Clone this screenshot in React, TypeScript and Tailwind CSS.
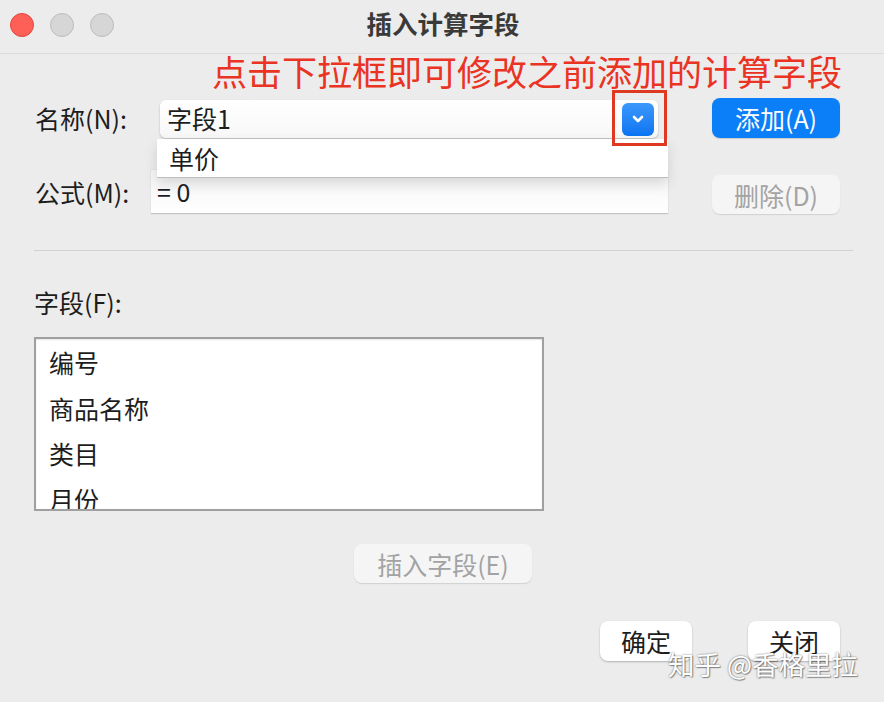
import React from 'react';

const font = { fontFamily: '"Noto Sans CJK SC", "Noto Sans", sans-serif' };

function Chevron() {
  return (
    <svg width="14" height="10" viewBox="0 0 14 10" fill="none">
      <path d="M3 3l4 4 4-4" stroke="white" strokeWidth="2.6" strokeLinecap="round" strokeLinejoin="round" />
    </svg>
  );
}

export default function App() {
  const fields = ['编号', '商品名称', '类目', '月份'];

  return (
    <div className="relative w-[884px] h-[702px] overflow-hidden bg-[#ececec] text-[#1d1d1d]" style={font}>
      {/* title bar */}
      <div className="h-[54px] grid grid-cols-[1fr_auto_1fr] items-center border-b border-[#dcdcdc]">
        <div className="flex items-center gap-[16px] pl-[10px] mt-[-4px]">
          <span className="w-[24px] h-[24px] rounded-full bg-[#fe5f57] border border-[#e2463f]" />
          <span className="w-[24px] h-[24px] rounded-full bg-[#d6d6d6] border border-[#bdbdbd]" />
          <span className="w-[24px] h-[24px] rounded-full bg-[#d6d6d6] border border-[#bdbdbd]" />
        </div>
        <div className="mb-[8px] text-[25.5px] leading-[30px] font-bold text-[#3a3a3a] pl-[2px]">插入计算字段</div>
        <div />
      </div>

      <div className="px-[34px]">
        <p className="mt-[-2px] h-[41px] leading-[38px] text-right pr-[8px] text-[35px] text-[#ea3323]">
          点击下拉框即可修改之前添加的计算字段
        </p>

        {/* name row */}
        <div className="mt-[4px] flex items-center h-[42px]">
          <span className="w-[126px] pl-[1px] text-[25px] leading-[30px]">名称(N):</span>
          <div className="relative w-[498px] h-[38px] mt-[2px] rounded-[6px] bg-gradient-to-b from-white to-[#f7f7f7] shadow-[0_1px_2px_rgba(0,0,0,0.25)] flex items-center">
            <span className="pl-[7px] pb-[3px] text-[25px] leading-[30px]">字段1</span>
            <span className="ml-auto mr-[4px] w-[32px] h-[33px] rounded-[6px] bg-gradient-to-b from-[#3b98fb] to-[#0b74f2] flex items-center justify-center">
              <Chevron />
            </span>
            <div className="absolute left-[-3px] top-[39px] z-10 w-[511px] h-[39px] bg-white border-b border-[#bdbdbd] shadow-[0_6px_12px_rgba(0,0,0,0.12)] flex items-center">
              <span className="pl-[12px] text-[25px] leading-[30px]">单价</span>
            </div>
            <div className="absolute right-[-9px] top-[-10px] z-20 w-[55px] h-[56px] border-[3px] border-[#dd3a21]" />
          </div>
          <button className="ml-auto mr-[10px] w-[128px] h-[40px] rounded-[8px] bg-[#0b7ff7] text-white text-[25px] leading-[30px] shadow-[0_1px_1px_rgba(0,0,0,0.15)]">
            添加(A)
          </button>
        </div>

        {/* formula row */}
        <div className="mt-[31px] flex items-center h-[44px]">
          <span className="w-[117px] pl-[1px] text-[25px] leading-[30px]">公式(M):</span>
          <div className="w-[517px] h-[44px] bg-gradient-to-b from-[#f4f4f4] to-white border-b border-[#c4c4c4] shadow-[0_0_1px_rgba(0,0,0,0.2)] flex items-start">
            <span className="pl-[6px] pt-[6px] text-[25px] leading-[30px]">= 0</span>
          </div>
          <button className="ml-auto mr-[10px] mt-[5px] w-[128px] h-[39px] rounded-[8px] bg-[#f5f5f5] text-[#a3a3a3] text-[25px] leading-[30px] shadow-[0_1px_1px_rgba(0,0,0,0.12)]">
            删除(D)
          </button>
        </div>

        <div className="mt-[36px] mr-[-3px] h-px bg-[#d2d2d2]" />

        <div className="mt-[36px] text-[25px] leading-[30px]">字段(F):</div>

        <div className="mt-[20px] w-[510px] h-[174px] overflow-hidden bg-white border-2 border-[#a0a0a0] shadow-[inset_0_1px_2px_rgba(0,0,0,0.1)]">
          <div className="pt-[5px] pl-[13px] flex flex-col">
            {fields.map((f) => (
              <div key={f} className="h-[45.5px] leading-[36px] text-[25px]">{f}</div>
            ))}
          </div>
        </div>

        <button className="mt-[33px] ml-[320px] w-[178px] h-[39px] rounded-[8px] bg-[#f5f5f5] text-[#a3a3a3] text-[25px] leading-[30px] shadow-[0_1px_1px_rgba(0,0,0,0.12)]">
          插入字段(E)
        </button>

        <div className="mt-[38px] flex justify-end gap-[56px] pr-[10px]">
          <button className="w-[92px] h-[40px] rounded-[8px] bg-white text-[25px] leading-[30px] text-[#1d1d1d] shadow-[0_1px_2px_rgba(0,0,0,0.25)]">确定</button>
          <button className="w-[92px] h-[40px] rounded-[8px] bg-white text-[25px] leading-[30px] text-[#1d1d1d] shadow-[0_1px_2px_rgba(0,0,0,0.25)]">关闭</button>
        </div>
      </div>

      {/* watermark */}
      <div className="absolute left-[668px] top-[646px] text-[26.5px] leading-[36px] text-white [text-shadow:0_0_2px_rgba(0,0,0,0.55),1px_1px_1px_rgba(0,0,0,0.35)]">
        知乎 @香格里拉
      </div>
    </div>
  );
}
